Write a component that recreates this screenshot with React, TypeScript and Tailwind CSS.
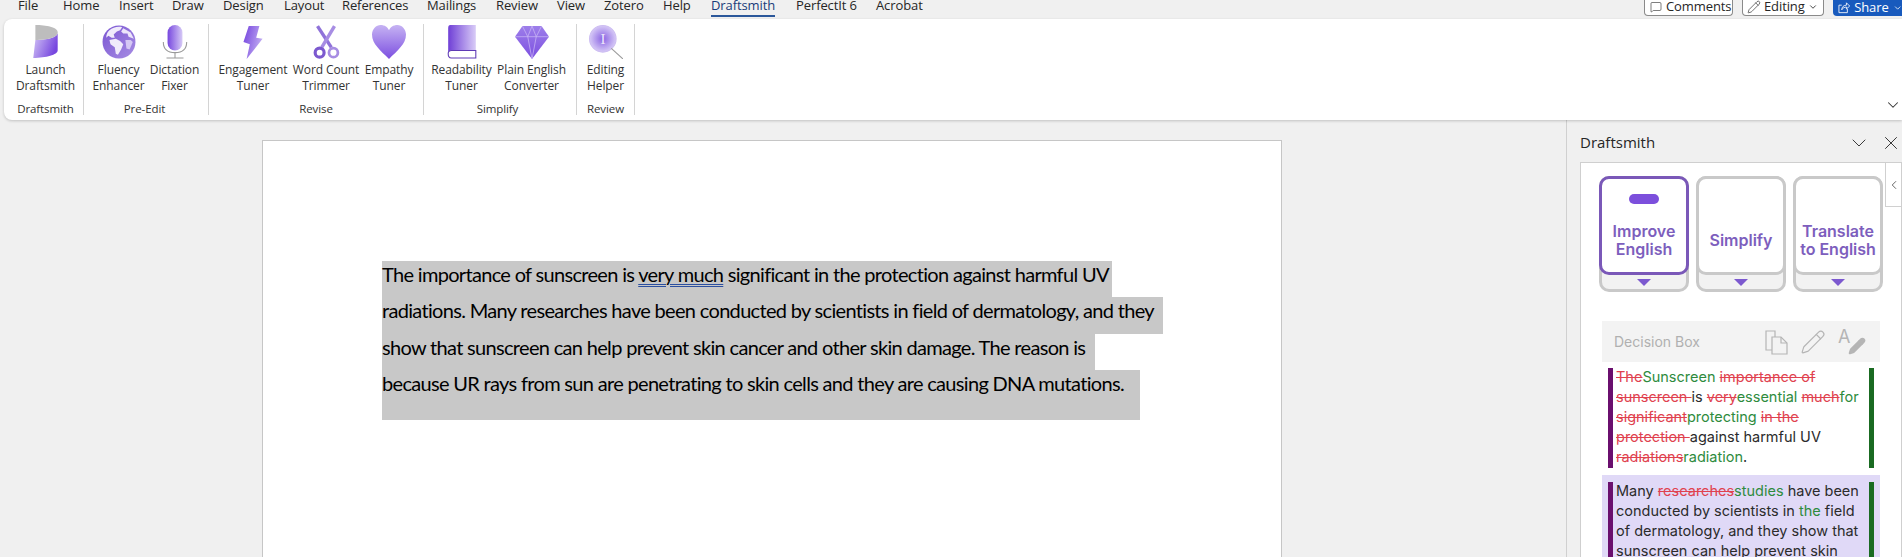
import { ChevronDown, ChevronLeft, X, MessageSquare, Pencil } from "lucide-react";

const tabs = [
  { label: "File", w: "w-[45px]" },
  { label: "Home", w: "w-[56px]" },
  { label: "Insert", w: "w-[53px]" },
  { label: "Draw", w: "w-[51px]" },
  { label: "Design", w: "w-[61px]" },
  { label: "Layout", w: "w-[58px]" },
  { label: "References", w: "w-[85px]" },
  { label: "Mailings", w: "w-[69px]" },
  { label: "Review", w: "w-[61px]" },
  { label: "View", w: "w-[47px]" },
  { label: "Zotero", w: "w-[59px]" },
  { label: "Help", w: "w-[48px]" },
];

const icons: Record<string, React.ReactNode> = {
  launch: (
    <svg width="34" height="34" viewBox="0 0 32 32">
      <defs>
        <linearGradient id="g1" x1="0" y1="0" x2="1" y2="0.4">
          <stop offset="0" stopColor="#d6c9f6" />
          <stop offset="1" stopColor="#7747df" />
        </linearGradient>
      </defs>
      <path d="M6 14 C16 14 27 12 27 7 V24 C27 28 16 31 4 31 Z" fill="url(#g1)" />
      <path d="M6 0 C16 0 27 2 27 7 C27 12 16 14 6 14 Z" fill="#bdbdbd" />
    </svg>
  ),
  globe: (
    <svg width="34" height="34" viewBox="0 0 32 32">
      <defs>
        <linearGradient id="g2" x1="0" y1="0" x2="1" y2="1">
          <stop offset="0" stopColor="#7a55d2" />
          <stop offset="1" stopColor="#a78de3" />
        </linearGradient>
      </defs>
      <circle cx="16" cy="16" r="15.5" fill="url(#g2)" />
      <path d="M7 5 C10 2 15 1 19 2 L17 5 L14 6 L11 9 L12 12 L9 12 L6 10 L4 12 C4 9 5 7 7 5 Z" fill="#f0ebfb" />
      <path d="M7 14 L13 13 L17 15 L20 18 L18 23 L15 28 L13 27 L12 21 L8 18 Z" fill="#f0ebfb" />
      <path d="M20 3 L27 7 L30 13 L25 11 L24 8 L20 8 L18 6 Z" fill="#ece5fa" />
      <path d="M22 14 L27 14 L29 16 L26 23 L23 22 Z" fill="#d5c8f4" />
    </svg>
  ),
  mic: (
    <svg width="34" height="34" viewBox="0 0 32 32">
      <defs>
        <linearGradient id="g3" x1="0" y1="0" x2="1" y2="0">
          <stop offset="0" stopColor="#7747df" />
          <stop offset="1" stopColor="#d6c9f6" />
        </linearGradient>
      </defs>
      <rect x="9" y="0" width="14" height="24" rx="7" fill="url(#g3)" />
      <path d="M5 16 C5 24 10 26 16 26 C22 26 27 24 27 16" fill="none" stroke="#9a9a9a" strokeWidth="1" />
      <path d="M16 26 V31 M8 31 H24" stroke="#9a9a9a" strokeWidth="1" />
    </svg>
  ),
  bolt: (
    <svg width="34" height="34" viewBox="0 0 32 32">
      <defs>
        <linearGradient id="g4" x1="0" y1="0.2" x2="1" y2="0.6">
          <stop offset="0" stopColor="#7747df" />
          <stop offset="1" stopColor="#c6b3f3" />
        </linearGradient>
      </defs>
      <path d="M12 1 H22 L19 12 L25 13 L10 32 L13 18 L7 16 Z" fill="url(#g4)" />
    </svg>
  ),
  scissors: (
    <svg width="34" height="34" viewBox="0 0 32 32" fill="none">
      <path d="M8 1 L21 21" strokeWidth="3.2" stroke="#8f72d9" />
      <path d="M24 1 L12 21" strokeWidth="3.2" stroke="#a78de3" />
      <circle cx="10" cy="26" r="4.2" strokeWidth="3" stroke="#7c59cf" />
      <circle cx="23" cy="26" r="4.2" strokeWidth="2.6" stroke="#a78de3" />
    </svg>
  ),
  heart: (
    <svg width="34" height="34" viewBox="0 0 32 32">
      <defs>
        <linearGradient id="g5" x1="0" y1="0" x2="0" y2="1">
          <stop offset="0" stopColor="#c6b3f3" />
          <stop offset="1" stopColor="#7c4fe0" />
        </linearGradient>
      </defs>
      <path d="M16 32 C8 24 0 18 0 9 C0 4 4 0 8 0 C12 0 15 2 16 5 C17 2 20 0 24 0 C28 0 32 4 32 9 C32 18 24 24 16 32 Z" fill="url(#g5)" />
    </svg>
  ),
  book: (
    <svg width="34" height="34" viewBox="0 0 32 32">
      <defs>
        <linearGradient id="g6" x1="0" y1="0" x2="1" y2="0">
          <stop offset="0" stopColor="#6f3fd6" />
          <stop offset="1" stopColor="#d9ccf7" />
        </linearGradient>
      </defs>
      <path d="M3 3 Q3 0 5 0 H29 V24 H6 Q3 24 3 27 Z" fill="url(#g6)" />
      <path d="M3 27 Q3 24 6 24 H29 V31 H6 Q3 31 3 27 Z" fill="#fff" stroke="#5f3ab5" strokeWidth="1" />
    </svg>
  ),
  gem: (
    <svg width="34" height="34" viewBox="0 0 32 32">
      <defs>
        <linearGradient id="g7" x1="0" y1="0" x2="0" y2="1">
          <stop offset="0" stopColor="#9d7eea" />
          <stop offset="1" stopColor="#7c4fe0" />
        </linearGradient>
      </defs>
      <path d="M7 1 H25 L32 11 L16 32 L0 11 Z" fill="url(#g7)" />
      <path d="M0 11 H32 M7 1 L12 11 L16 32 L20 11 L25 1 M12 11 L16 1 L20 11" fill="none" stroke="#c9b8f4" strokeWidth="0.7" />
    </svg>
  ),
  lens: (
    <svg width="34" height="34" viewBox="0 0 32 32">
      <defs>
        <radialGradient id="g8">
          <stop offset="0" stopColor="#8a63e3" />
          <stop offset="1" stopColor="#d6c9f6" />
        </radialGradient>
      </defs>
      <circle cx="13" cy="13" r="12.5" fill="url(#g8)" stroke="#cdbdf2" />
      <text x="13" y="18" fontSize="14" textAnchor="middle" fill="#efe9fb" fontFamily="Liberation Serif, serif">I</text>
      <path d="M21 22 L32 32" stroke="#9a9a9a" strokeWidth="1" />
    </svg>
  ),
};

const groups = [
  { name: "Draftsmith", w: "w-[80px] pl-[4px]", items: [{ icon: "launch", l1: "Launch", l2: "Draftsmith", w: "w-[75px]" }] },
  {
    name: "Pre-Edit",
    w: "w-[125px] pr-[3px]",
    items: [
      { icon: "globe", l1: "Fluency", l2: "Enhancer", w: "w-[60px]" },
      { icon: "mic", l1: "Dictation", l2: "Fixer", w: "w-[52px]" },
    ],
  },
  {
    name: "Revise",
    w: "w-[215px]",
    items: [
      { icon: "bolt", l1: "Engagement", l2: "Tuner", w: "w-[80px]" },
      { icon: "scissors", l1: "Word Count", l2: "Trimmer", w: "w-[66px]" },
      { icon: "heart", l1: "Empathy", l2: "Tuner", w: "w-[60px]" },
    ],
  },
  {
    name: "Simplify",
    w: "w-[153px] pr-[5px]",
    items: [
      { icon: "book", l1: "Readability", l2: "Tuner", w: "w-[68px]" },
      { icon: "gem", l1: "Plain English", l2: "Converter", w: "w-[72px]" },
    ],
  },
  { name: "Review", w: "w-[58px]", items: [{ icon: "lens", l1: "Editing", l2: "Helper", w: "w-[56px]" }] },
];

function ModeCard({ active, lines }: { active?: boolean; lines: string[] }) {
  return (
    <div className="w-[90px] h-[116px] shrink-0 rounded-[10px] border-[3px] border-[#c9c9c9] bg-[#f2f2f2] relative">
      <div
        className={
          active
            ? "absolute -left-[3px] -top-[3px] w-[90px] h-[99px] rounded-[10px] border-[3px] border-[#7a58b8] bg-white flex flex-col items-center"
            : "absolute -left-[3px] -top-[3px] w-[90px] h-[99px] rounded-[10px] border-[3px] border-[#c9c9c9] bg-white flex flex-col items-center"
        }
      >
        {active ? <div className="w-[30px] h-[10px] rounded-full bg-[#7c4fdc] mt-[15px]" /> : null}
        <div className={active ? "mt-[18px] text-center" : lines.length > 1 ? "mt-[43px] text-center" : "mt-[52px] text-center"}>
          {lines.map((l) => (
            <div key={l} className="text-[16px] leading-[18px] font-semibold text-[#7d5ebd] font-['Inter',sans-serif] whitespace-nowrap">
              {l}
            </div>
          ))}
        </div>
      </div>
      <div className="absolute left-[35px] top-[100px] w-0 h-0 border-l-[7px] border-r-[7px] border-t-[7px] border-l-transparent border-r-transparent border-t-[#7c59cf]" />
    </div>
  );
}

const del = "text-[#e0424f] line-through";
const ins = "text-[#2e8b3d]";

export default function App() {
  return (
    <div className="w-[1902px] h-[557px] overflow-hidden bg-[#f0f0f0] flex flex-col font-['Open_Sans',sans-serif] text-[#262626]">
      {/* Tabs */}
      <div className="h-[19px] flex items-center relative shrink-0 text-[13px] tracking-[-0.1px]">
        <div className="flex items-center pl-[18px] -mt-[7px]">
          {tabs.map((t) => (
            <span key={t.label} className={t.w}>
              {t.label}
            </span>
          ))}
          <span className="w-[64px] text-[#1a3c7a] font-medium border-b-2 border-[#2b579a] leading-[19px] whitespace-nowrap">Draftsmith</span>
          <span className="ml-[21px] w-[80px]">PerfectIt 6</span>
          <span>Acrobat</span>
        </div>
        <div className="ml-auto flex items-center gap-[9px] -mt-[4px] h-[17px]">
          <div className="h-[17px] w-[89px] rounded-b-[4px] border border-t-0 border-[#8a8a8a] bg-white flex items-center gap-[4px] pl-[5px] overflow-hidden">
            <MessageSquare size={12} strokeWidth={1.2} />
            <span>Comments</span>
          </div>
          <div className="h-[17px] w-[82px] rounded-b-[4px] border border-t-0 border-[#8a8a8a] bg-white flex items-center gap-[3px] pl-[4px] overflow-hidden">
            <Pencil size={14} strokeWidth={1.1} />
            <span>Editing</span>
            <ChevronDown size={10} />
          </div>
          <div className="h-[17px] w-[69px] rounded-bl-[4px] bg-[#185abd] text-white flex items-center gap-[4px] pl-[5px] overflow-hidden">
            <svg width="13" height="13" viewBox="0 0 13 13" fill="none" stroke="currentColor" strokeWidth="0.9">
              <path d="M4 4 H1 V12 H10 V8" />
              <path d="M4 9 C4 6 6 4 9 4 V1.5 L12.5 5 L9 8 V6 C7 6 5 7 4 9 Z" />
            </svg>
            <span>Share</span>
            <ChevronDown size={10} />
          </div>
        </div>
      </div>

      {/* Ribbon */}
      <div className="h-[101px] ml-[4px] shrink-0 rounded-l-[8px] bg-white shadow-[0_1px_3px_rgba(0,0,0,0.2)] flex relative text-[12px] tracking-[-0.1px] text-[#333]">
        {groups.map((g) => (
          <div key={g.name} className={`${g.w} mt-[5px] mb-[5px] shrink-0 border-r border-[#d4d4d4] flex flex-col items-center`}>
            <div className="flex justify-center">
              {g.items.map((it) => (
                <div key={it.l1} className={`${it.w} flex flex-col items-center`}>
                  <div className="h-[34px] flex items-center justify-center mt-[1px]">{icons[it.icon]}</div>
                  <div className="mt-[3px] leading-[16px] text-center whitespace-nowrap">
                    {it.l1}
                    <br />
                    {it.l2}
                  </div>
                </div>
              ))}
            </div>
            <div className="mt-auto -mb-[2px] text-[11.5px] leading-[16px]">{g.name}</div>
          </div>
        ))}
        <ChevronDown size={18} strokeWidth={1.4} className="absolute right-0 bottom-[6px] text-[#333]" />
      </div>

      {/* Body */}
      <div className="flex-1 flex min-h-0">
        <div className="flex-1 pl-[262px] pt-[20px] overflow-hidden">
          <div className="w-[1020px] h-[500px] bg-white border border-[#c6c6c6] pl-[119px] pt-[120px]">
            <div className="font-['Lato',sans-serif] text-[20px] leading-[26.4px] text-black tracking-[-0.68px]">
              <div className="bg-[#c8c8c8] w-[730px] h-[36.4px] whitespace-nowrap">
                The importance of sunscreen is{" "}
                <span className="underline decoration-double decoration-[#2b4fa0] decoration-1 underline-offset-2">very much</span>{" "}
                significant in the protection against harmful UV
              </div>
              <div className="bg-[#c8c8c8] w-[781px] h-[36.4px] whitespace-nowrap">
                radiations. Many researches have been conducted by scientists in field of dermatology, and they
              </div>
              <div className="bg-[#c8c8c8] w-[713px] h-[36.4px] whitespace-nowrap">
                show that sunscreen can help prevent skin cancer and other skin damage. The reason is
              </div>
              <div className="bg-[#c8c8c8] w-[758px] h-[50px] whitespace-nowrap">
                because UR rays from sun are penetrating to skin cells and they are causing DNA mutations.
              </div>
            </div>
          </div>
        </div>

        {/* Task pane */}
        <div className="w-[336px] shrink-0 border-l border-[#d0d0d0] pl-[13px] flex flex-col">
          <div className="h-[42px] pt-[3px] flex items-center shrink-0 relative">
            <span className="text-[15px] text-[#262626]">Draftsmith</span>
            <ChevronDown size={24} strokeWidth={0.9} className="absolute right-[31px] top-[11px]" />
            <X size={22} strokeWidth={1} className="absolute right-0 top-[12px]" />
          </div>
          <div className="flex-1 bg-white border-l border-t border-r border-[#cfcfcf] relative min-h-0 overflow-hidden">
            <div className="absolute right-0 top-0 w-[16px] h-[44px] bg-white border-l border-b border-[#d0d0d0] flex items-center justify-center z-10">
              <ChevronLeft size={14} strokeWidth={1.2} />
            </div>
            <div className="flex gap-[7px] pl-[18px] pt-[13px]">
              <ModeCard active lines={["Improve", "English"]} />
              <ModeCard lines={["Simplify"]} />
              <ModeCard lines={["Translate", "to English"]} />
            </div>
            <div className="ml-[21px] mt-[29px] w-[278px] text-[14.5px] leading-[20px] font-['Inter',sans-serif] text-[#2b2b2b]">
              <div className="h-[41px] bg-[#f3f3f3] flex items-center pl-[12px] relative">
                <span className="text-[#b0b0b0] text-[14px]">Decision Box</span>
                <div className="absolute left-[163px] top-[8px] flex items-center gap-[12px] text-[#b5b5b5]">
                  <svg width="23" height="25" viewBox="0 0 23 25" fill="none" stroke="currentColor" strokeWidth="1.2">
                    <path d="M7 20 H1 V1 H10 V7" />
                    <path d="M7 7 H16 L22 13 V24 H7 Z" />
                    <path d="M16 7 V13 H22" />
                  </svg>
                  <Pencil size={26} strokeWidth={1.1} />
                  <div className="relative w-[28px] h-[26px]">
                    <span className="absolute left-0 -top-[1px] text-[18px] leading-[18px] text-[#b5b5b5]">A</span>
                    <Pencil size={18} fill="#b5b5b5" className="absolute right-0 bottom-0" />
                  </div>
                </div>
              </div>
              <div className="flex h-[112px] pt-[6px] pl-[6px] pr-[5px] bg-white">
                <div className="w-[5px] h-[100px] bg-[#6a0f6e] shrink-0" />
                <div className="w-[253px] ml-[3px] -mt-[1px] leading-[20px] shrink-0">
                  <span className={del}>The</span>
                  <span className={ins}>Sunscreen</span> <span className={del}>importance of sunscreen </span>is{" "}
                  <span className={del}>very</span>
                  <span className={ins}>essential</span> <span className={del}>much</span>
                  <span className={ins}>for</span> <span className={del}>significant</span>
                  <span className={ins}>protecting</span> <span className={del}>in the protection </span>against harmful UV{" "}
                  <span className={del}>radiations</span>
                  <span className={ins}>radiation</span>.
                </div>
                <div className="w-[5px] h-[100px] bg-[#1a6b22] shrink-0" />
              </div>
              <div className="flex h-[90px] mt-[1px] pt-[7px] pl-[6px] pr-[5px] bg-[#e0d9f7]">
                <div className="w-[5px] h-[90px] bg-[#6a0f6e] shrink-0" />
                <div className="w-[253px] ml-[3px] -mt-[1px] leading-[20px] shrink-0">
                  Many <span className={del}>researches</span>
                  <span className={ins}>studies</span> have been conducted by scientists in <span className={ins}>the</span> field of dermatology, and they show that sunscreen can help prevent skin
                </div>
                <div className="w-[5px] h-[90px] bg-[#1a6b22] shrink-0" />
              </div>
            </div>
          </div>
        </div>
      </div>
    </div>
  );
}
